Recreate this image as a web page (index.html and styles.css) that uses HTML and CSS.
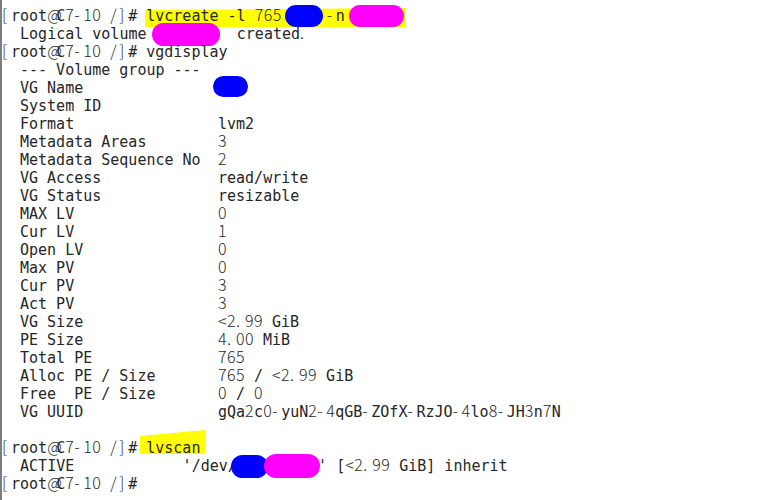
FILE: index.html
```html
<!DOCTYPE html>
<html>
<head>
<meta charset="utf-8">
<title>terminal</title>
<link rel="stylesheet" href="styles.css">
</head>
<body>
<div class="term">
<div class="ln"><span class="hl hl-a"></span><span class="f">[</span>root<span class="f">@</span>C<span class="f">7</span><span class="f">-</span><span class="f">1</span><span class="f">0</span> <span class="f">/</span><span class="f">]</span># lvcreate -l <span class="f">7</span><span class="f">6</span><span class="f">5</span>     <span class="f">-</span>n       <span class="blob blue b1"></span><span class="blob pink b2"></span></div>
<div class="ln">  Logical volume          created<span class="f">.</span><span class="blob pink b3"></span></div>
<div class="ln"><span class="f">[</span>root<span class="f">@</span>C<span class="f">7</span><span class="f">-</span><span class="f">1</span><span class="f">0</span> <span class="f">/</span><span class="f">]</span># vgdisplay</div>
<div class="ln kv">--- Volume group ---</div>
<div class="ln kv"><span class="k">VG Name</span><span class="blob blue b4"></span></div>
<div class="ln kv"><span class="k">System ID</span></div>
<div class="ln kv"><span class="k">Format</span>lvm2</div>
<div class="ln kv"><span class="k">Metadata Areas</span><span class="f">3</span></div>
<div class="ln kv"><span class="k">Metadata Sequence No</span><span class="f">2</span></div>
<div class="ln kv"><span class="k">VG Access</span>read/write</div>
<div class="ln kv"><span class="k">VG Status</span>resizable</div>
<div class="ln kv"><span class="k">MAX LV</span><span class="f">0</span></div>
<div class="ln kv"><span class="k">Cur LV</span><span class="f">1</span></div>
<div class="ln kv"><span class="k">Open LV</span><span class="f">0</span></div>
<div class="ln kv"><span class="k">Max PV</span><span class="f">0</span></div>
<div class="ln kv"><span class="k">Cur PV</span><span class="f">3</span></div>
<div class="ln kv"><span class="k">Act PV</span><span class="f">3</span></div>
<div class="ln kv"><span class="k">VG Size</span><span class="f">&lt;</span><span class="f">2</span><span class="f">.</span><span class="f">9</span><span class="f">9</span> GiB</div>
<div class="ln kv"><span class="k">PE Size</span><span class="f">4</span><span class="f">.</span><span class="f">0</span><span class="f">0</span> MiB</div>
<div class="ln kv"><span class="k">Total PE</span><span class="f">7</span><span class="f">6</span><span class="f">5</span></div>
<div class="ln kv"><span class="k">Alloc PE / Size</span><span class="f">7</span><span class="f">6</span><span class="f">5</span> / <span class="f">&lt;</span><span class="f">2</span><span class="f">.</span><span class="f">9</span><span class="f">9</span> GiB</div>
<div class="ln kv"><span class="k">Free  PE / Size</span><span class="f">0</span> / <span class="f">0</span></div>
<div class="ln kv"><span class="k">VG UUID</span>gQa<span class="f">2</span>c<span class="f">0</span><span class="f">-</span>yuN<span class="f">2</span><span class="f">-</span><span class="f">4</span>qGB<span class="f">-</span>ZOfX<span class="f">-</span>RzJO<span class="f">-</span><span class="f">4</span>lo<span class="f">8</span><span class="f">-</span>JH<span class="f">3</span>n<span class="f">7</span>N</div>
<div class="ln"> </div>
<div class="ln"><span class="hl hl-b"></span><span class="f">[</span>root<span class="f">@</span>C<span class="f">7</span><span class="f">-</span><span class="f">1</span><span class="f">0</span> <span class="f">/</span><span class="f">]</span># lvscan</div>
<div class="ln">  ACTIVE            '/dev/         ' [<span class="f">&lt;</span><span class="f">2</span><span class="f">.</span><span class="f">9</span><span class="f">9</span> GiB] inherit<span class="blob blue b5"></span><span class="blob pink b6"></span></div>
<div class="ln"><span class="f">[</span>root<span class="f">@</span>C<span class="f">7</span><span class="f">-</span><span class="f">1</span><span class="f">0</span> <span class="f">/</span><span class="f">]</span>#</div>
</div>
</body>
</html>
```

FILE: styles.css
```css
html, body {
  margin: 0;
  padding: 0;
  background: #ffffff;
}

body {
  width: 760px;
  height: 500px;
  overflow: hidden;
}

.term {
  position: relative;
  z-index: 0;
  box-sizing: border-box;
  height: 500px;
  border-left: 2px solid #7c7c7c;
  padding-top: 7px;
  font-family: "DejaVu Sans Mono", monospace;
  font-size: 15px;
  line-height: 18px;
  color: #262626;
}

.ln {
  position: relative;
  height: 18px;
  white-space: pre;
}

.kv {
  padding-left: 18px;
}

.k {
  display: inline-block;
  width: 198px;
}

.f {
  display: inline-block;
  width: 9px;
  line-height: 0;
  font-family: "Noto Sans CJK SC", "Noto Sans", sans-serif;
  font-size: 16px;
  font-weight: 300;
  color: #2a2a2a;
}

.hl {
  position: absolute;
  z-index: -1;
  background: #ffff00;
}

.hl-a {
  left: 143px;
  top: 1px;
  width: 261px;
  height: 19px;
  clip-path: polygon(0 2px, 100% 0, 100% 100%, 0 100%);
}

.hl-b {
  left: 138px;
  top: -9px;
  width: 65px;
  height: 24px;
  clip-path: polygon(0 6px, 100% 0, 100% 100%, 0 100%);
}

.blob {
  position: absolute;
  border-radius: 12px;
}

.blue { background: #0000ff; }
.pink { background: #ff00ff; }

.b1 { left: 283px; top: -2px; width: 38px; height: 22px; }
.b2 { left: 347px; top: -2px; width: 55px; height: 22px; }
.b3 { left: 150px; top: -2px; width: 68px; height: 23px; }
.b4 { left: 211px; top: -3px; width: 35px; height: 21px; }
.b5 { left: 229px; top: -2px; width: 37px; height: 23px; }
.b6 { left: 262px; top: -3px; width: 56px; height: 24px; }
```
